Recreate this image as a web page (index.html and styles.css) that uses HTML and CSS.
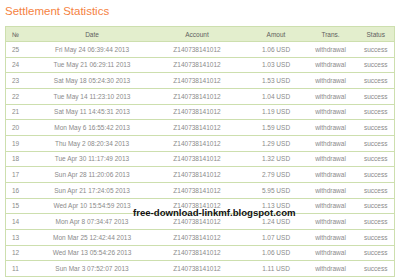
FILE: index.html
```html
<!DOCTYPE html>
<html>
<head>
<meta charset="utf-8">
<link rel="stylesheet" href="styles.css">
</head>
<body>
<h1 class="title">Settlement Statistics</h1>
<table class="stats">
  <colgroup>
    <col class="c-num"><col class="c-date"><col class="c-acc"><col class="c-amt"><col class="c-trans"><col class="c-status">
  </colgroup>
  <thead>
    <tr><th class="num">№</th><th>Date</th><th>Account</th><th>Amout</th><th>Trans.</th><th>Status</th></tr>
  </thead>
  <tbody>
    <tr><td class="num">25</td><td>Fri May 24 06:39:44 2013</td><td>Z140738141012</td><td>1.06 USD</td><td>withdrawal</td><td>success</td></tr>
    <tr><td class="num">24</td><td>Tue May 21 06:29:11 2013</td><td>Z140738141012</td><td>1.03 USD</td><td>withdrawal</td><td>success</td></tr>
    <tr><td class="num">23</td><td>Sat May 18 05:24:30 2013</td><td>Z140738141012</td><td>1.53 USD</td><td>withdrawal</td><td>success</td></tr>
    <tr><td class="num">22</td><td>Tue May 14 11:23:10 2013</td><td>Z140738141012</td><td>1.04 USD</td><td>withdrawal</td><td>success</td></tr>
    <tr><td class="num">21</td><td>Sat May 11 14:45:31 2013</td><td>Z140738141012</td><td>1.19 USD</td><td>withdrawal</td><td>success</td></tr>
    <tr><td class="num">20</td><td>Mon May 6 16:55:42 2013</td><td>Z140738141012</td><td>1.59 USD</td><td>withdrawal</td><td>success</td></tr>
    <tr><td class="num">19</td><td>Thu May 2 08:20:34 2013</td><td>Z140738141012</td><td>1.29 USD</td><td>withdrawal</td><td>success</td></tr>
    <tr><td class="num">18</td><td>Tue Apr 30 11:17:49 2013</td><td>Z140738141012</td><td>1.32 USD</td><td>withdrawal</td><td>success</td></tr>
    <tr><td class="num">17</td><td>Sun Apr 28 11:20:06 2013</td><td>Z140738141012</td><td>2.79 USD</td><td>withdrawal</td><td>success</td></tr>
    <tr><td class="num">16</td><td>Sun Apr 21 17:24:05 2013</td><td>Z140738141012</td><td>5.95 USD</td><td>withdrawal</td><td>success</td></tr>
    <tr><td class="num">15</td><td>Wed Apr 10 15:54:59 2013</td><td>Z140738141012</td><td>1.13 USD</td><td>withdrawal</td><td>success</td></tr>
    <tr><td class="num">14</td><td>Mon Apr 8 07:34:47 2013</td><td>Z140738141012</td><td>1.24 USD</td><td>withdrawal</td><td>success</td></tr>
    <tr><td class="num">13</td><td>Mon Mar 25 12:42:44 2013</td><td>Z140738141012</td><td>1.07 USD</td><td>withdrawal</td><td>success</td></tr>
    <tr><td class="num">12</td><td>Wed Mar 13 05:54:26 2013</td><td>Z140738141012</td><td>1.06 USD</td><td>withdrawal</td><td>success</td></tr>
    <tr><td class="num">11</td><td>Sun Mar 3 07:52:07 2013</td><td>Z140738141012</td><td>1.11 USD</td><td>withdrawal</td><td>success</td></tr>
  </tbody>
</table>
<div class="watermark">free-download-linkmf.blogspot.com</div>
</body>
</html>
```
FILE: styles.css
```css
html, body {
  margin: 0;
  padding: 0;
  background: #ffffff;
}
body {
  padding: 0 6px 0 5px;
  font-family: "Liberation Sans", Arial, sans-serif;
  position: relative;
}
.title {
  margin: 4px 0 8px 0;
  font-size: 11.5px;
  line-height: 14px;
  font-weight: normal;
  color: #f5823f;
}
.stats {
  width: 389px;
  border-collapse: collapse;
  table-layout: fixed;
  border: 1px solid #cddfae;
  font-size: 6.5px;
}
.c-num { width: 33px; }
.c-date { width: 107px; }
.c-acc { width: 103px; }
.c-amt { width: 55px; }
.c-trans { width: 54px; }
.c-status { width: 37px; }
.stats th, .stats td {
  padding: 0;
  text-align: center;
  white-space: nowrap;
  border-bottom: 1px solid #cddfae;
}
.stats th {
  height: 14px;
  background: #e3eecd;
  color: #5f5f5f;
  font-weight: normal;
}
.stats td {
  height: 14.67px;
  color: #8a8a8a;
}
.stats .num {
  text-align: left;
  padding-left: 6px;
}
.watermark {
  position: absolute;
  left: 133px;
  top: 207px;
  font-family: "Liberation Sans", Arial, sans-serif;
  font-weight: bold;
  font-size: 9.6px;
  color: #111111;
  background: transparent;
  white-space: nowrap;
}
```
